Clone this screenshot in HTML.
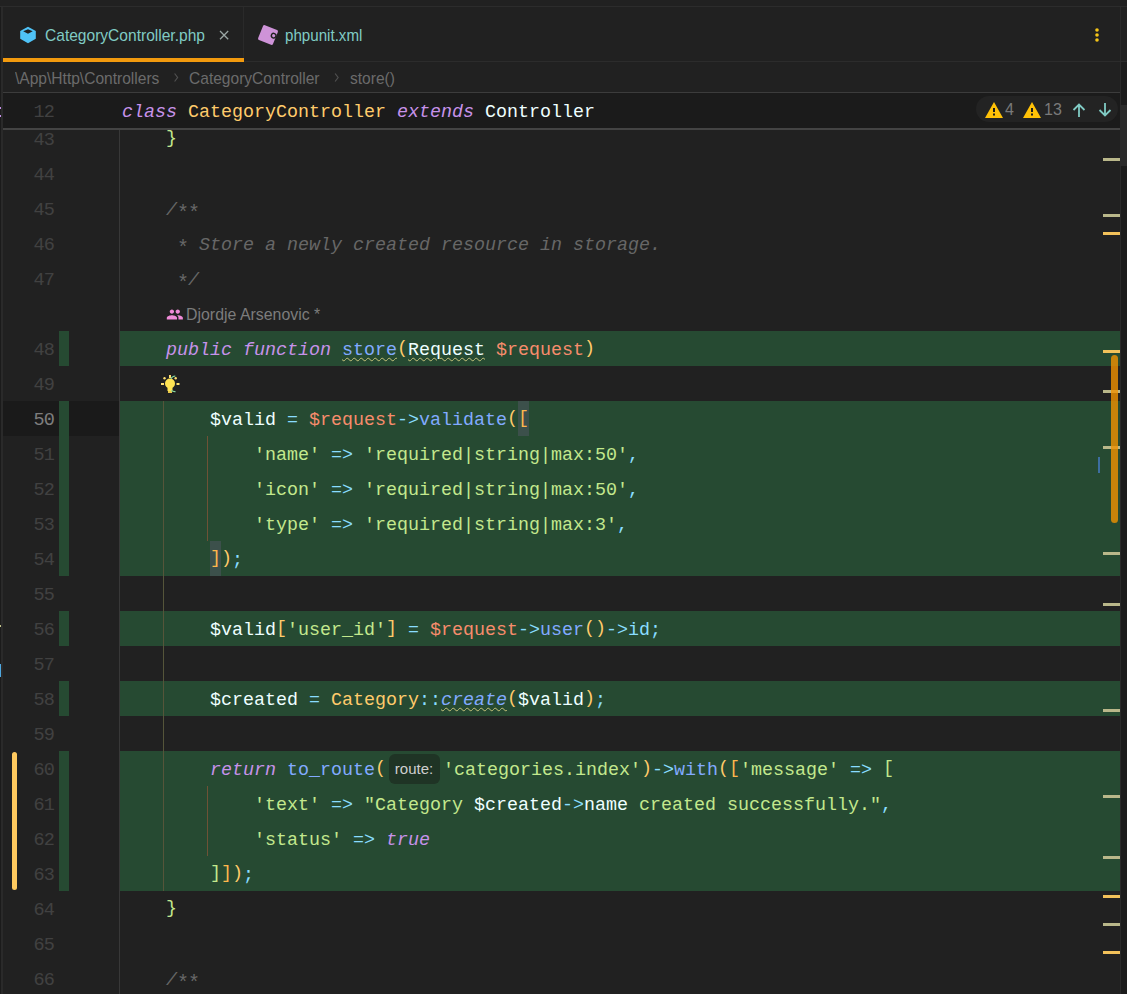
<!DOCTYPE html>
<html><head><meta charset="utf-8"><style>
*{margin:0;padding:0;box-sizing:border-box}
html,body{width:1127px;height:994px;overflow:hidden;background:#212121;}
body{position:relative;font-family:"Liberation Sans",sans-serif;}
.abs{position:absolute}
.topline{position:absolute;left:0;top:6px;width:1127px;height:1px;background:#2c2c2c}
.leftline{position:absolute;left:1px;top:7px;width:2px;height:987px;background:#2a2a2a}
.tabtxt{position:absolute;font-size:17px;transform-origin:0 0;transform:scaleX(0.915);color:#80cbc4;white-space:pre;line-height:20px}
.tabsep{position:absolute;left:243px;top:7px;width:1px;height:54px;background:#2a2a2a}
.tabbot{position:absolute;left:3px;top:61px;width:1124px;height:1px;background:#2c2c2c}
.orange{position:absolute;left:3px;top:58px;width:241px;height:4px;background:#f29a0e}
.bc{position:absolute;top:69px;font-size:17px;transform-origin:0 0;transform:scaleX(0.915);color:#6b6b6b;white-space:pre;line-height:20px}
.bcline{position:absolute;left:3px;top:92px;width:1117px;height:1px;background:#3c3c3c}
.sticky{position:absolute;left:3px;top:93px;width:1117px;height:35px;background:#1b1b1b}
.stickyline{position:absolute;left:3px;top:128px;width:1117px;height:2px;background:#444}
.gutsep{position:absolute;left:119px;top:130px;width:1px;height:864px;background:#383838}
.grn{position:absolute;left:120px;width:1000px;height:35px;background:#264a32}
.gm{position:absolute;left:59px;width:10px;height:35px;background:#264a32}
.curg{position:absolute;left:3px;width:116px;height:35px;background:#1a1a1a}
.ln{position:absolute;left:0;width:54px;text-align:right;font-family:"Liberation Mono",monospace;font-size:18.5px;letter-spacing:-0.9px;line-height:35px;height:35px;color:#414141;padding-top:2px}
.ln.cur{color:#7e7e7e}
.code{position:absolute;left:122px;font-family:"Liberation Mono",monospace;font-size:18.33px;line-height:35px;height:35px;white-space:pre;padding-top:2px}
.inlay{display:inline-block;width:57px;height:20px;position:relative;vertical-align:top}
.ib{position:absolute;left:2.5px;top:0.5px;width:51px;height:30px;border-radius:6px;background:#1f3425;color:#cfcfcf;font-family:"Liberation Sans",sans-serif;font-size:15px;line-height:30px;text-align:center}
.mk{position:absolute;left:1103px;width:17px;height:3px}
.mk.k{background:#b9b78a}
.mk.y{background:#f2c15a}
.rstrip{position:absolute;left:1120px;top:62px;width:7px;height:932px;background:#1c1c1c;border-left:1px solid #2a2a2a}
.rline{position:absolute;left:1120px;top:7px;width:1px;height:55px;background:#2a2a2a}
</style></head><body>
<div class="topline"></div>
<div class="leftline"></div>
<div class="abs" style="left:0;top:7px;width:1px;height:987px;background:#1b1b1b"></div>
<div class="abs" style="left:0;top:107px;width:1px;height:2px;background:#c792ea"></div>
<div class="abs" style="left:0;top:115px;width:1px;height:2px;background:#c792ea"></div>
<div class="abs" style="left:0;top:625px;width:1px;height:2px;background:#c3c38a"></div>
<div class="abs" style="left:0;top:664px;width:1px;height:13px;background:#4fa8e0"></div>
<!-- tabs -->
<svg class="abs" style="left:18px;top:25px" width="20" height="20" viewBox="18 25 20 20">
<path fill="#4fc3f7" fill-rule="evenodd" d="M28 26.8 L35.8 31 L35.8 38.8 L28 43.2 L20.2 38.8 L20.2 31 Z M28 29.2 L23.2 31.3 L28 33.7 L32.7 31.3 Z"/>
</svg>
<div class="tabtxt" style="left:45px;top:26px">CategoryController.php</div>
<svg class="abs" style="left:217px;top:28px" width="14" height="14" viewBox="0 0 14 14"><path d="M3 3 L11.2 11.2 M11.2 3 L3 11.2" stroke="#9aa6a4" stroke-width="1.3"/></svg>
<div class="tabsep"></div>
<svg class="abs" style="left:256px;top:23px" width="24" height="24" viewBox="0 0 24 24">
<g transform="rotate(22 12 12)"><rect x="4" y="4" width="16" height="16" rx="1.5" fill="#ce93d8"/><circle cx="17.5" cy="10.5" r="3" fill="#212121"/><circle cx="17.5" cy="10.5" r="1.6" fill="#ce93d8"/></g>
</svg>
<div class="tabtxt" style="left:284.5px;top:26px;transform:scaleX(0.89)">phpunit.xml</div>
<svg class="abs" style="left:1092px;top:26px" width="10" height="18" viewBox="0 0 10 18"><circle cx="5" cy="4" r="1.8" fill="#f5c518"/><circle cx="5" cy="9" r="1.8" fill="#f5c518"/><circle cx="5" cy="14" r="1.8" fill="#f5c518"/></svg>
<div class="rline"></div>
<div class="tabbot"></div>
<div class="orange"></div>
<!-- breadcrumbs -->
<div class="bc" style="left:15px">\App\Http\Controllers</div>
<svg class="abs" style="left:0;top:0;overflow:visible" width="1" height="1"><path d="M174.6 73.5 L177.6 77.5 L174.6 81.5 M335.1 73.5 L338.1 77.5 L335.1 81.5" stroke="#505050" stroke-width="1.2" fill="none"/></svg>
<div class="bc" style="left:189px">CategoryController</div>
<div class="bc" style="left:350px">store()</div>
<div class="bcline"></div>
<div class="rstrip"></div>
<!-- editor rows -->
<div class="grn" style="top:331px"></div>
<div class="gm" style="top:331px"></div>
<div class="grn" style="top:401px"></div>
<div class="gm" style="top:401px"></div>
<div class="curg" style="top:401px"></div>
<div class="gm" style="top:401px"></div>
<div class="grn" style="top:436px"></div>
<div class="gm" style="top:436px"></div>
<div class="grn" style="top:471px"></div>
<div class="gm" style="top:471px"></div>
<div class="grn" style="top:506px"></div>
<div class="gm" style="top:506px"></div>
<div class="grn" style="top:541px"></div>
<div class="gm" style="top:541px"></div>
<div class="grn" style="top:611px"></div>
<div class="gm" style="top:611px"></div>
<div class="grn" style="top:681px"></div>
<div class="gm" style="top:681px"></div>
<div class="grn" style="top:751px"></div>
<div class="gm" style="top:751px"></div>
<div class="grn" style="top:786px"></div>
<div class="gm" style="top:786px"></div>
<div class="grn" style="top:821px"></div>
<div class="gm" style="top:821px"></div>
<div class="grn" style="top:856px"></div>
<div class="gm" style="top:856px"></div>
<div class="gutsep"></div>
<!-- indent guides -->
<div class="abs" style="left:163px;top:401px;width:1px;height:490px;background:#55553a"></div>
<div class="abs" style="left:207px;top:436px;width:1px;height:105px;background:#6e5236"></div>
<div class="abs" style="left:207px;top:786px;width:1px;height:70px;background:#6e5236"></div>
<!-- brace highlight -->
<div class="abs" style="left:518px;top:401px;width:11px;height:35px;background:#3c504b"></div>
<div class="abs" style="left:210px;top:541px;width:11px;height:35px;background:#3c504b"></div>
<div class="ln" style="top:121px">43</div>
<div class="code" style="top:121px"><span style="color:#eeffff;">    </span><span style="color:#c3e88d;position:relative;top:-2px;">}</span></div>
<div class="ln" style="top:156px">44</div>
<div class="ln" style="top:191px">45</div>
<div class="code" style="top:191px"><span style="color:#676767;font-style:italic;">    /<span style="position:relative;top:4px;display:inline-block;width:11px;text-align:center;font-style:normal;font-size:20px;line-height:20px">*</span><span style="position:relative;top:4px;display:inline-block;width:11px;text-align:center;font-style:normal;font-size:20px;line-height:20px">*</span></span></div>
<div class="ln" style="top:226px">46</div>
<div class="code" style="top:226px"><span style="color:#676767;font-style:italic;">     <span style="position:relative;top:4px;display:inline-block;width:11px;text-align:center;font-style:normal;font-size:20px;line-height:20px">*</span> Store a newly created resource in storage.</span></div>
<div class="ln" style="top:261px">47</div>
<div class="code" style="top:261px"><span style="color:#676767;font-style:italic;">     <span style="position:relative;top:4px;display:inline-block;width:11px;text-align:center;font-style:normal;font-size:20px;line-height:20px">*</span>/</span></div>
<div class="ln" style="top:331px">48</div>
<div class="code" style="top:331px"><span style="color:#eeffff;">    </span><span style="color:#c792ea;font-style:italic;">public</span><span style="color:#eeffff;"> </span><span style="color:#c792ea;font-style:italic;">function</span><span style="color:#eeffff;"> </span><span style="color:#82aaff;text-decoration:underline wavy #c3c07a;text-decoration-thickness:1px;text-underline-offset:2px;">store</span><span style="color:#ffcb6b;position:relative;top:-2px;">(</span><span style="color:#eeffff;text-decoration:underline wavy #c3c07a;text-decoration-thickness:1px;text-underline-offset:2px;">Request</span><span style="color:#eeffff;"> </span><span style="color:#f78c6c;">$request</span><span style="color:#ffcb6b;position:relative;top:-2px;">)</span></div>
<div class="ln" style="top:366px">49</div>
<div class="ln cur" style="top:401px">50</div>
<div class="code" style="top:401px"><span style="color:#eeffff;">        </span><span style="color:#eeffff;">$valid</span><span style="color:#eeffff;"> </span><span style="color:#89ddff;">=</span><span style="color:#eeffff;"> </span><span style="color:#f78c6c;">$request</span><span style="color:#89ddff;">-&gt;</span><span style="color:#82aaff;">validate</span><span style="color:#ffcb6b;position:relative;top:-2px;">(</span><span style="color:#ffb74d;position:relative;top:-2px;">[</span></div>
<div class="ln" style="top:436px">51</div>
<div class="code" style="top:436px"><span style="color:#eeffff;">            </span><span style="color:#c3e88d;">&#x27;name&#x27;</span><span style="color:#eeffff;"> </span><span style="color:#89ddff;">=&gt;</span><span style="color:#eeffff;"> </span><span style="color:#c3e88d;">&#x27;required|string|max:50&#x27;</span><span style="color:#89ddff;">,</span></div>
<div class="ln" style="top:471px">52</div>
<div class="code" style="top:471px"><span style="color:#eeffff;">            </span><span style="color:#c3e88d;">&#x27;icon&#x27;</span><span style="color:#eeffff;"> </span><span style="color:#89ddff;">=&gt;</span><span style="color:#eeffff;"> </span><span style="color:#c3e88d;">&#x27;required|string|max:50&#x27;</span><span style="color:#89ddff;">,</span></div>
<div class="ln" style="top:506px">53</div>
<div class="code" style="top:506px"><span style="color:#eeffff;">            </span><span style="color:#c3e88d;">&#x27;type&#x27;</span><span style="color:#eeffff;"> </span><span style="color:#89ddff;">=&gt;</span><span style="color:#eeffff;"> </span><span style="color:#c3e88d;">&#x27;required|string|max:3&#x27;</span><span style="color:#89ddff;">,</span></div>
<div class="ln" style="top:541px">54</div>
<div class="code" style="top:541px"><span style="color:#eeffff;">        </span><span style="color:#ffb74d;position:relative;top:-2px;">]</span><span style="color:#ffcb6b;position:relative;top:-2px;">)</span><span style="color:#89ddff;">;</span></div>
<div class="ln" style="top:576px">55</div>
<div class="ln" style="top:611px">56</div>
<div class="code" style="top:611px"><span style="color:#eeffff;">        </span><span style="color:#eeffff;">$valid</span><span style="color:#ffcb6b;position:relative;top:-2px;">[</span><span style="color:#c3e88d;">&#x27;user_id&#x27;</span><span style="color:#ffcb6b;position:relative;top:-2px;">]</span><span style="color:#eeffff;"> </span><span style="color:#89ddff;">=</span><span style="color:#eeffff;"> </span><span style="color:#f78c6c;">$request</span><span style="color:#89ddff;">-&gt;</span><span style="color:#82aaff;">user</span><span style="color:#ffcb6b;position:relative;top:-2px;">()</span><span style="color:#89ddff;">-&gt;</span><span style="color:#89ddff;">id</span><span style="color:#89ddff;">;</span></div>
<div class="ln" style="top:646px">57</div>
<div class="ln" style="top:681px">58</div>
<div class="code" style="top:681px"><span style="color:#eeffff;">        </span><span style="color:#eeffff;">$created</span><span style="color:#eeffff;"> </span><span style="color:#89ddff;">=</span><span style="color:#eeffff;"> </span><span style="color:#ffcb6b;">Category</span><span style="color:#89ddff;">::</span><span style="color:#82aaff;font-style:italic;text-decoration:underline wavy #c3c07a;text-decoration-thickness:1px;text-underline-offset:2px;">create</span><span style="color:#ffcb6b;position:relative;top:-2px;">(</span><span style="color:#eeffff;">$valid</span><span style="color:#ffcb6b;position:relative;top:-2px;">)</span><span style="color:#89ddff;">;</span></div>
<div class="ln" style="top:716px">59</div>
<div class="ln" style="top:751px">60</div>
<div class="code" style="top:751px"><span style="color:#eeffff;">        </span><span style="color:#c792ea;font-style:italic;">return</span><span style="color:#eeffff;"> </span><span style="color:#82aaff;">to_route</span><span style="color:#ffcb6b;position:relative;top:-2px;">(</span><span class="inlay"><span class="ib">route:</span></span><span style="color:#c3e88d;">&#x27;categories.index&#x27;</span><span style="color:#ffcb6b;position:relative;top:-2px;">)</span><span style="color:#89ddff;">-&gt;</span><span style="color:#82aaff;">with</span><span style="color:#ffcb6b;position:relative;top:-2px;">(</span><span style="color:#ffb74d;position:relative;top:-2px;">[</span><span style="color:#c3e88d;">&#x27;message&#x27;</span><span style="color:#eeffff;"> </span><span style="color:#89ddff;">=&gt;</span><span style="color:#eeffff;"> </span><span style="color:#c3e88d;position:relative;top:-2px;">[</span></div>
<div class="ln" style="top:786px">61</div>
<div class="code" style="top:786px"><span style="color:#eeffff;">            </span><span style="color:#c3e88d;">&#x27;text&#x27;</span><span style="color:#eeffff;"> </span><span style="color:#89ddff;">=&gt;</span><span style="color:#eeffff;"> </span><span style="color:#c3e88d;">&quot;Category </span><span style="color:#eeffff;">$created</span><span style="color:#89ddff;">-&gt;</span><span style="color:#eeffff;">name</span><span style="color:#c3e88d;"> created successfully.&quot;</span><span style="color:#89ddff;">,</span></div>
<div class="ln" style="top:821px">62</div>
<div class="code" style="top:821px"><span style="color:#eeffff;">            </span><span style="color:#c3e88d;">&#x27;status&#x27;</span><span style="color:#eeffff;"> </span><span style="color:#89ddff;">=&gt;</span><span style="color:#eeffff;"> </span><span style="color:#c792ea;font-style:italic;">true</span></div>
<div class="ln" style="top:856px">63</div>
<div class="code" style="top:856px"><span style="color:#eeffff;">        </span><span style="color:#c3e88d;position:relative;top:-2px;">]</span><span style="color:#ffb74d;position:relative;top:-2px;">]</span><span style="color:#ffcb6b;position:relative;top:-2px;">)</span><span style="color:#89ddff;">;</span></div>
<div class="ln" style="top:891px">64</div>
<div class="code" style="top:891px"><span style="color:#eeffff;">    </span><span style="color:#c3e88d;position:relative;top:-2px;">}</span></div>
<div class="ln" style="top:926px">65</div>
<div class="ln" style="top:961px">66</div>
<div class="code" style="top:961px"><span style="color:#676767;font-style:italic;">    /<span style="position:relative;top:4px;display:inline-block;width:11px;text-align:center;font-style:normal;font-size:20px;line-height:20px">*</span><span style="position:relative;top:4px;display:inline-block;width:11px;text-align:center;font-style:normal;font-size:20px;line-height:20px">*</span></span></div>
<!-- inlay author -->
<svg class="abs" style="left:0;top:0;overflow:visible" width="1" height="1"><path transform="translate(166.07 305.75) scale(0.73)" fill="#f08bd8" d="M16 11c1.66 0 2.99-1.34 2.99-3S17.66 5 16 5c-1.66 0-3 1.34-3 3s1.34 3 3 3zm-8 0c1.660 0 2.99-1.34 2.99-3S9.66 5 8 5C6.34 5 5 6.34 5 8s1.34 3 3 3zm0 2c-2.33 0-7 1.17-7 3.5V19h14v-2.5c0-2.33-4.670-3.5-7-3.5zm8 0c-.29 0-.62.02-.97.05 1.16.84 1.970 1.97 1.97 3.45V19h6v-2.5c0-2.33-4.67-3.5-7-3.5z"/></svg>
<div class="abs" style="left:186px;top:304px;font-size:16.5px;transform-origin:0 0;transform:scaleX(0.963);color:#7c7c7c;line-height:20px;white-space:pre">Djordje Arsenovic *</div>
<!-- lightbulb -->
<svg class="abs" style="left:158px;top:372px" width="24" height="24" viewBox="158 372 24 24">
<circle cx="170" cy="383.5" r="5" fill="#ffe352"/><rect x="167.5" y="387" width="5" height="4" fill="#ffe352"/><rect x="168" y="391" width="4" height="2" fill="#e8c84a"/>
<rect x="161" y="383" width="3" height="2" fill="#ffe070"/><rect x="176.5" y="383" width="3" height="2" fill="#ffe070"/><rect x="169" y="375" width="2" height="3" fill="#ffe070"/>
<circle cx="164.5" cy="378.2" r="1.2" fill="#ffe070"/><circle cx="175.7" cy="378.2" r="1.2" fill="#ffe070"/><path d="M171 378.8 Q172 376.2 175.3 376" stroke="#86d9a0" stroke-width="1.2" fill="none"/><path d="M171.2 390.6 Q173 391.8 175.5 391.6" stroke="#86d9a0" stroke-width="1.2" fill="none"/>
</svg>
<!-- sticky header -->
<div class="sticky"></div>
<div class="ln" style="top:93px">12</div>
<div class="code" style="top:93px"><span style="color:#c792ea;font-style:italic;">class</span><span style="color:#eeffff;"> </span><span style="color:#ffcb6b;">CategoryController</span><span style="color:#eeffff;"> </span><span style="color:#c792ea;font-style:italic;">extends</span><span style="color:#eeffff;"> </span><span style="color:#eeffff;">Controller</span></div>
<div class="stickyline"></div>
<div class="abs" style="left:976px;top:96px;width:142px;height:26px;border-radius:13px;background:#232323"></div>
<svg class="abs" style="left:984px;top:101px" width="20" height="18" viewBox="0 0 20 18"><path d="M10 1 L19 17 L1 17 Z" fill="#ffc107"/><rect x="9" y="7" width="2" height="4" fill="#1b1b1b"/><rect x="9" y="12.5" width="2" height="2" fill="#1b1b1b"/></svg>
<div class="abs" style="left:1005px;top:100px;font-size:16px;color:#7a7a7a;line-height:20px">4</div>
<svg class="abs" style="left:1022px;top:101px" width="20" height="18" viewBox="0 0 20 18"><path d="M10 1 L19 17 L1 17 Z" fill="#ffc107"/><rect x="9" y="7" width="2" height="4" fill="#1b1b1b"/><rect x="9" y="12.5" width="2" height="2" fill="#1b1b1b"/></svg>
<div class="abs" style="left:1044px;top:100px;font-size:16px;color:#7a7a7a;line-height:20px">13</div>
<svg class="abs" style="left:1071px;top:102px" width="16" height="16" viewBox="0 0 16 16"><path d="M8 15 V2.5 M2.5 8 L8 2.5 L13.5 8" stroke="#80cbc4" stroke-width="1.8" fill="none"/></svg>
<svg class="abs" style="left:1097px;top:102px" width="16" height="16" viewBox="0 0 16 16"><path d="M8 1 V13.5 M2.5 8 L8 13.5 L13.5 8" stroke="#80cbc4" stroke-width="1.8" fill="none"/></svg>
<!-- markers -->
<div class="abs" style="left:1120px;top:105px;width:7px;height:61px;background:#2b2b2b"></div>
<div class="mk k" style="top:158.0px"></div>
<div class="mk k" style="top:214.0px"></div>
<div class="mk y" style="top:231.5px"></div>
<div class="mk y" style="top:349.5px"></div>
<div class="mk k" style="top:389.5px"></div>
<div class="mk k" style="top:446.0px"></div>
<div class="mk k" style="top:552.0px"></div>
<div class="mk k" style="top:603.0px"></div>
<div class="mk k" style="top:709.0px"></div>
<div class="mk k" style="top:794.5px"></div>
<div class="mk k" style="top:855.5px"></div>
<div class="mk y" style="top:894.5px"></div>
<div class="mk k" style="top:922.5px"></div>
<div class="mk y" style="top:950.5px"></div>
<div class="abs" style="left:1098px;top:457px;width:2px;height:16px;background:#3d6ea0"></div>
<div class="abs" style="left:1111px;top:355px;width:7px;height:168px;border-radius:3.5px;background:rgba(240,145,0,0.8)"></div>
<div class="abs" style="left:12px;top:752px;width:5px;height:138px;border-radius:3px;background:#ffca5f"></div>
</body></html>
